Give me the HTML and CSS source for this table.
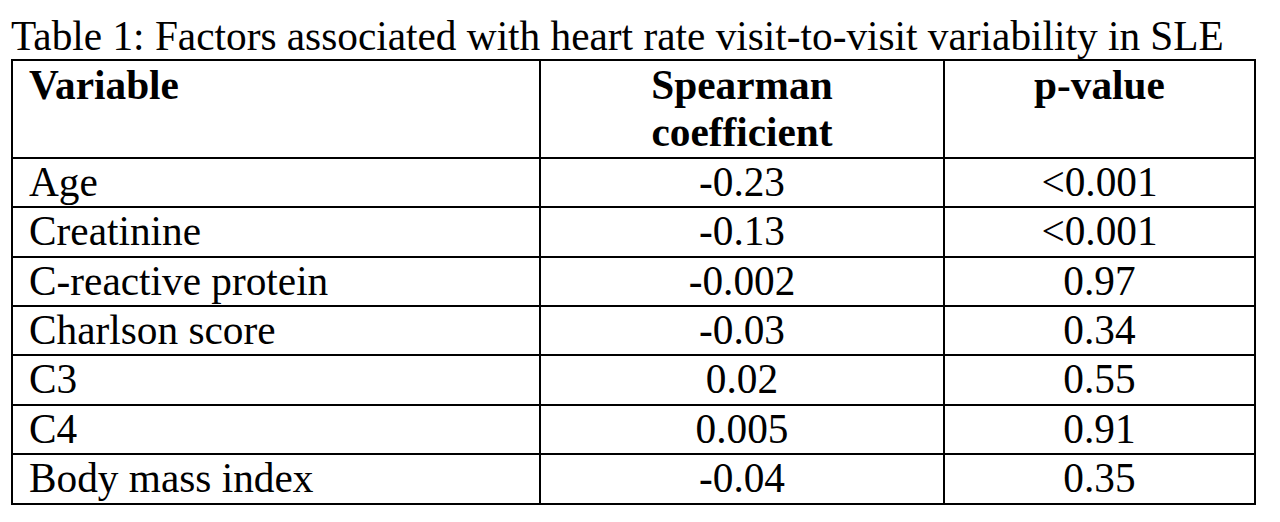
FILE: index.html
```html
<!DOCTYPE html>
<html>
<head>
<meta charset="utf-8">
<link rel="stylesheet" href="styles.css">
</head>
<body>
<div class="page">
  <div class="caption">Table 1: Factors associated with heart rate visit-to-visit variability in SLE</div>
  <table class="data">
    <colgroup>
      <col class="c1">
      <col class="c2">
      <col class="c3">
    </colgroup>
    <thead>
      <tr>
        <th class="left">Variable</th>
        <th>Spearman<br>coefficient</th>
        <th>p-value</th>
      </tr>
    </thead>
    <tbody>
      <tr><td class="left">Age</td><td>-0.23</td><td>&lt;0.001</td></tr>
      <tr><td class="left">Creatinine</td><td>-0.13</td><td>&lt;0.001</td></tr>
      <tr><td class="left">C-reactive protein</td><td>-0.002</td><td>0.97</td></tr>
      <tr><td class="left">Charlson score</td><td>-0.03</td><td>0.34</td></tr>
      <tr><td class="left">C3</td><td>0.02</td><td>0.55</td></tr>
      <tr><td class="left">C4</td><td>0.005</td><td>0.91</td></tr>
      <tr><td class="left">Body mass index</td><td>-0.04</td><td>0.35</td></tr>
    </tbody>
  </table>
</div>
</body>
</html>
```
FILE: styles.css
```css
html, body {
  margin: 0;
  padding: 0;
  background: #ffffff;
}
.page {
  padding: 13px 0 0 11px;
  font-family: "Liberation Serif", "Times New Roman", serif;
  font-size: 41.3px;
  color: #000;
}
.caption {
  line-height: 46px;
  height: 46px;
  white-space: nowrap;
}
.data {
  border-collapse: collapse;
  table-layout: fixed;
  width: 1245px;
}
.c1 { width: 528px; }
.c2 { width: 404px; }
.c3 { width: 311px; }
.data th,
.data td {
  border: 2px solid #000;
  padding: 0 16px;
  line-height: 47.4px;
  text-align: center;
  white-space: nowrap;
}
.data th {
  font-weight: bold;
  vertical-align: top;
  padding-top: 1px;
  padding-bottom: 0;
}
.data .left {
  text-align: left;
}
```
